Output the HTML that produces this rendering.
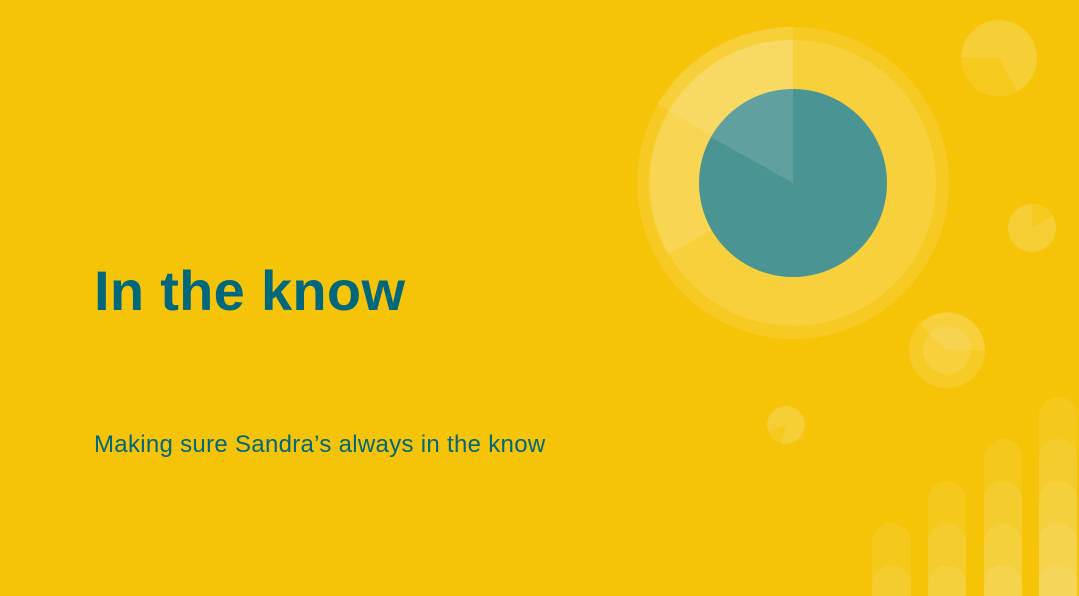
<!DOCTYPE html>
<html><head><meta charset="utf-8"><style>
html,body{margin:0;padding:0;width:1079px;height:596px;overflow:hidden;}
body{background:#F5C409;position:relative;font-family:"Liberation Sans",sans-serif;}
h1{position:absolute;left:94px;top:259px;margin:0;font-size:56px;font-weight:bold;color:#01677A;letter-spacing:0.3px;line-height:64px;}
p{position:absolute;left:94px;top:431px;margin:0;font-size:24px;color:#01677A;letter-spacing:0.3px;line-height:28px;}
svg{position:absolute;left:0;top:0;overflow:hidden;}
</style></head><body>
<svg width="1079" height="596" viewBox="0 0 1079 596">
<g fill="#fff">
<circle cx="793" cy="183" r="156" fill-opacity="0.1"/>
<circle cx="793" cy="183" r="143" fill-opacity="0.12"/>
<path d="M793 183 L793 27 A156 156 0 0 0 657 104 Z" fill-opacity="0.1"/>
<path d="M793 183 L793 40 A143 143 0 0 0 668 255 Z" fill-opacity="0.12"/>
</g>
<circle cx="793" cy="183" r="94" fill="#4A9593"/>
<path d="M793 183 L793 89 A94 94 0 0 0 711 137 Z" fill="#fff" fill-opacity="0.12"/>
<g fill="#fff">
<circle cx="999" cy="58" r="38" fill-opacity="0.18"/>
<path d="M999 58 L961 58 A38 38 0 0 0 1017 91 Z" fill="#F5C409" fill-opacity="0.55"/>
<circle cx="1032" cy="228" r="24" fill-opacity="0.18"/>
<path d="M1032 228 L1032 204 A24 24 0 0 1 1052 216 Z" fill="#F5C409" fill-opacity="0.5"/>
<circle cx="947" cy="350" r="38" fill-opacity="0.12"/>
<circle cx="947" cy="350" r="24" fill-opacity="0.1"/>
<path d="M947 350 L920 324 A38 38 0 0 1 985 350 Z" fill-opacity="0.1"/>
<circle cx="786" cy="425" r="19" fill-opacity="0.18"/>
<path d="M786 425 L768 431 A19 19 0 0 0 781 444 Z" fill="#F5C409" fill-opacity="0.5"/>
</g>
<g fill="#fff" fill-opacity="0.08">
<rect x="872" y="523" width="39" height="120" rx="19.5"/>
<rect x="872" y="565" width="39" height="120" rx="19.5"/>
<rect x="928" y="481" width="38" height="160" rx="19"/>
<rect x="928" y="523" width="38" height="160" rx="19"/>
<rect x="928" y="565" width="38" height="160" rx="19"/>
<rect x="984" y="439" width="38" height="200" rx="19"/>
<rect x="984" y="481" width="38" height="200" rx="19"/>
<rect x="984" y="523" width="38" height="200" rx="19"/>
<rect x="984" y="565" width="38" height="200" rx="19"/>
<rect x="1039" y="397" width="38" height="240" rx="19"/>
<rect x="1039" y="439" width="38" height="240" rx="19"/>
<rect x="1039" y="481" width="38" height="240" rx="19"/>
<rect x="1039" y="523" width="38" height="240" rx="19"/>
<rect x="1039" y="565" width="38" height="240" rx="19"/>
</g>
</svg>
<h1>In the know</h1>
<p>Making sure Sandra’s always in the know</p>
</body></html>
